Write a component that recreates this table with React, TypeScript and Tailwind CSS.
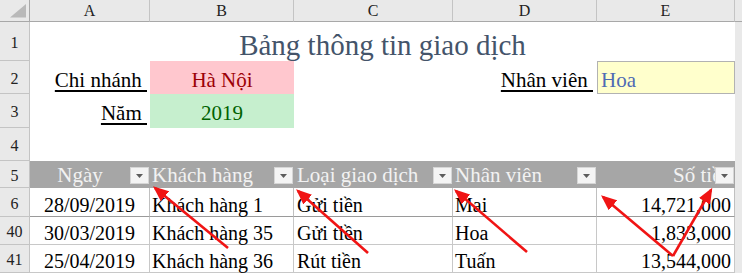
import React from 'react'

const colW = ['w-[120px]', 'w-[144px]', 'w-[159px]', 'w-[144px]', 'w-[138px]']

function RowHead({ n, h }: { n: string; h: string }) {
  return (
    <div className={`flex ${h} w-[30px] shrink-0 items-center justify-center border-r border-b border-[#c4c4c4] bg-[#e9e9e9] pt-[3px] text-[16px] text-[#222]`}>
      {n}
    </div>
  )
}

function Strip({ h, head }: { h: string; head?: boolean }) {
  return <div className={`${h} w-[7px] shrink-0 ${head ? 'border-b border-[#a8a8a8]' : ''} bg-[#e9e9e9]`} />
}

function Dropdown() {
  return (
    <span className="absolute right-px bottom-[4px] flex h-[17px] w-[19px] items-center justify-center border border-[#d6d6d6] bg-[#f4f4f4]">
      <svg width="7" height="4" viewBox="0 0 7 4">
        <path d="M0 0h7L3.5 4z" fill="#5c5c5c" />
      </svg>
    </span>
  )
}

const headers = [
  { t: 'Ngày', a: 'justify-center pr-[20px]' },
  { t: 'Khách hàng', a: 'justify-start pl-[2px]' },
  { t: 'Loại giao dịch', a: 'justify-start pl-[3px]' },
  { t: 'Nhân viên', a: 'justify-start pl-[2px]' },
  { t: 'Số tiền', a: 'justify-end pr-[3px]' },
]

const rows = [
  { n: '6', h: 'h-[29px]', line: 'border-[#c0c0c0] border-b-[#9a9a9a]', d: ['28/09/2019', 'Khách hàng 1', 'Gửi tiền', 'Mai', '14,721,000'] },
  { n: '40', h: 'h-[28px]', line: 'border-[#c8c8c8]', d: ['30/03/2019', 'Khách hàng 35', 'Gửi tiền', 'Hoa', '1,833,000'] },
  { n: '41', h: 'h-[28px]', line: 'border-[#c8c8c8]', d: ['25/04/2019', 'Khách hàng 36', 'Rút tiền', 'Tuấn', '13,544,000'] },
]

const align = ['justify-center', 'justify-start pl-[2px]', 'justify-start pl-[3px]', 'justify-start pl-[2px]', 'justify-end pr-[3px]']

export default function App() {
  return (
    <div className="relative h-[273px] w-[742px] overflow-hidden bg-white font-['Liberation_Serif',serif]">
      {/* column letters */}
      <div className="flex h-[22px]">
        <div className="relative h-[22px] w-[30px] shrink-0 border-r border-b border-[#a8a8a8] bg-[#e9e9e9]">
          <svg className="absolute left-0 top-0" width="29" height="21" viewBox="0 0 29 21">
            <path d="M10 17.5H26V4z" fill="#b9b9b9" />
          </svg>
        </div>
        {['A', 'B', 'C', 'D', 'E'].map((c, i) => (
          <div key={c} className={`flex h-[22px] ${colW[i]} shrink-0 items-center justify-center border-r border-b border-r-[#c4c4c4] border-b-[#a8a8a8] bg-[#e9e9e9] pt-[1px] text-[16px] text-[#222]`}>
            {c}
          </div>
        ))}
        <Strip h="h-[22px]" head />
      </div>

      {/* row 1 title */}
      <div className="flex h-[39px]">
        <RowHead n="1" h="h-[39px]" />
        <div className="flex h-[39px] w-[705px] shrink-0 items-end justify-center pb-[1px] text-[29px] leading-[29px] text-[#44546a]">
          Bảng thông tin giao dịch
        </div>
        <Strip h="h-[39px]" />
      </div>

      {/* row 2 */}
      <div className="flex h-[33px]">
        <RowHead n="2" h="h-[33px]" />
        <div className={`flex h-[33px] ${colW[0]} shrink-0 items-end justify-end pb-[3px] pr-[3px] text-[21px] leading-[21px] text-black`}>
          <span className="whitespace-pre underline underline-offset-[3px]">Chi nhánh </span>
        </div>
        <div className={`flex h-[33px] ${colW[1]} shrink-0 items-end justify-center bg-[#ffc7ce] pb-[3px] text-[21px] leading-[21px] text-[#9c0006]`}>
          Hà Nội
        </div>
        <div className={`h-[33px] ${colW[2]} shrink-0`} />
        <div className={`flex h-[33px] ${colW[3]} shrink-0 items-end justify-end pb-[3px] pr-[4px] text-[21px] leading-[21px] text-black`}>
          <span className="whitespace-pre underline underline-offset-[3px]">Nhân viên </span>
        </div>
        <div className={`flex h-[33px] ${colW[4]} shrink-0 items-end justify-start border border-[#b2b2b2] bg-[#ffffcc] pb-[2px] pl-[3px] text-[21px] leading-[21px] text-[#4f6bb4]`}>
          Hoa
        </div>
        <Strip h="h-[33px]" />
      </div>

      {/* row 3 */}
      <div className="flex h-[34px]">
        <RowHead n="3" h="h-[34px]" />
        <div className={`flex h-[34px] ${colW[0]} shrink-0 items-end justify-end pb-[4px] pr-[3px] text-[21px] leading-[21px] text-black`}>
          <span className="whitespace-pre underline underline-offset-[3px]">Năm </span>
        </div>
        <div className={`flex h-[34px] ${colW[1]} shrink-0 items-end justify-center bg-[#c6efce] pb-[4px] text-[21px] leading-[21px] text-[#006100]`}>
          2019
        </div>
        <div className="h-[34px] w-[441px] shrink-0" />
        <Strip h="h-[34px]" />
      </div>

      {/* row 4 */}
      <div className="flex h-[33px]">
        <RowHead n="4" h="h-[33px]" />
        <div className="h-[33px] w-[705px] shrink-0" />
        <Strip h="h-[33px]" />
      </div>

      {/* row 5 table header */}
      <div className="flex h-[27px]">
        <RowHead n="5" h="h-[27px]" />
        {headers.map((c, i) => (
          <div key={c.t} className={`relative flex h-[27px] ${colW[i]} shrink-0 items-end ${c.a} bg-[#a6a6a6] pb-[2px] text-[21px] leading-[21px] whitespace-nowrap text-[#f2f2f2]`}>
            {c.t}
            <Dropdown />
          </div>
        ))}
        <Strip h="h-[27px]" />
      </div>

      {/* data rows */}
      {rows.map((r) => (
        <div key={r.n} className={`flex ${r.h}`}>
          <RowHead n={r.n} h={r.h} />
          {r.d.map((v, i) => (
            <div key={i} className={`flex ${r.h} ${colW[i]} shrink-0 items-end ${align[i]} border-r border-b ${r.line} pb-px text-[20px] leading-[20px] whitespace-nowrap text-black`}>
              {v}
            </div>
          ))}
          <Strip h={r.h} />
        </div>
      ))}

      {/* red annotation arrows */}
      <svg className="pointer-events-none absolute inset-0" width="742" height="273" viewBox="0 0 742 273">
        <defs>
          <marker id="ah" markerWidth="6" markerHeight="5" refX="5" refY="2.5" orient="auto" markerUnits="strokeWidth">
            <path d="M0 0L6 2.5L0 5z" fill="#f01414" />
          </marker>
        </defs>
        <g stroke="#f01414" strokeWidth="2.6" fill="none" markerEnd="url(#ah)">
          <line x1="228" y1="248" x2="155" y2="188" />
          <line x1="368" y1="253" x2="298" y2="191" />
          <line x1="527" y1="252" x2="456" y2="191" />
          <line x1="673" y1="256" x2="603" y2="197" />
          <line x1="673" y1="256" x2="711" y2="190" />
        </g>
      </svg>
    </div>
  )
}
